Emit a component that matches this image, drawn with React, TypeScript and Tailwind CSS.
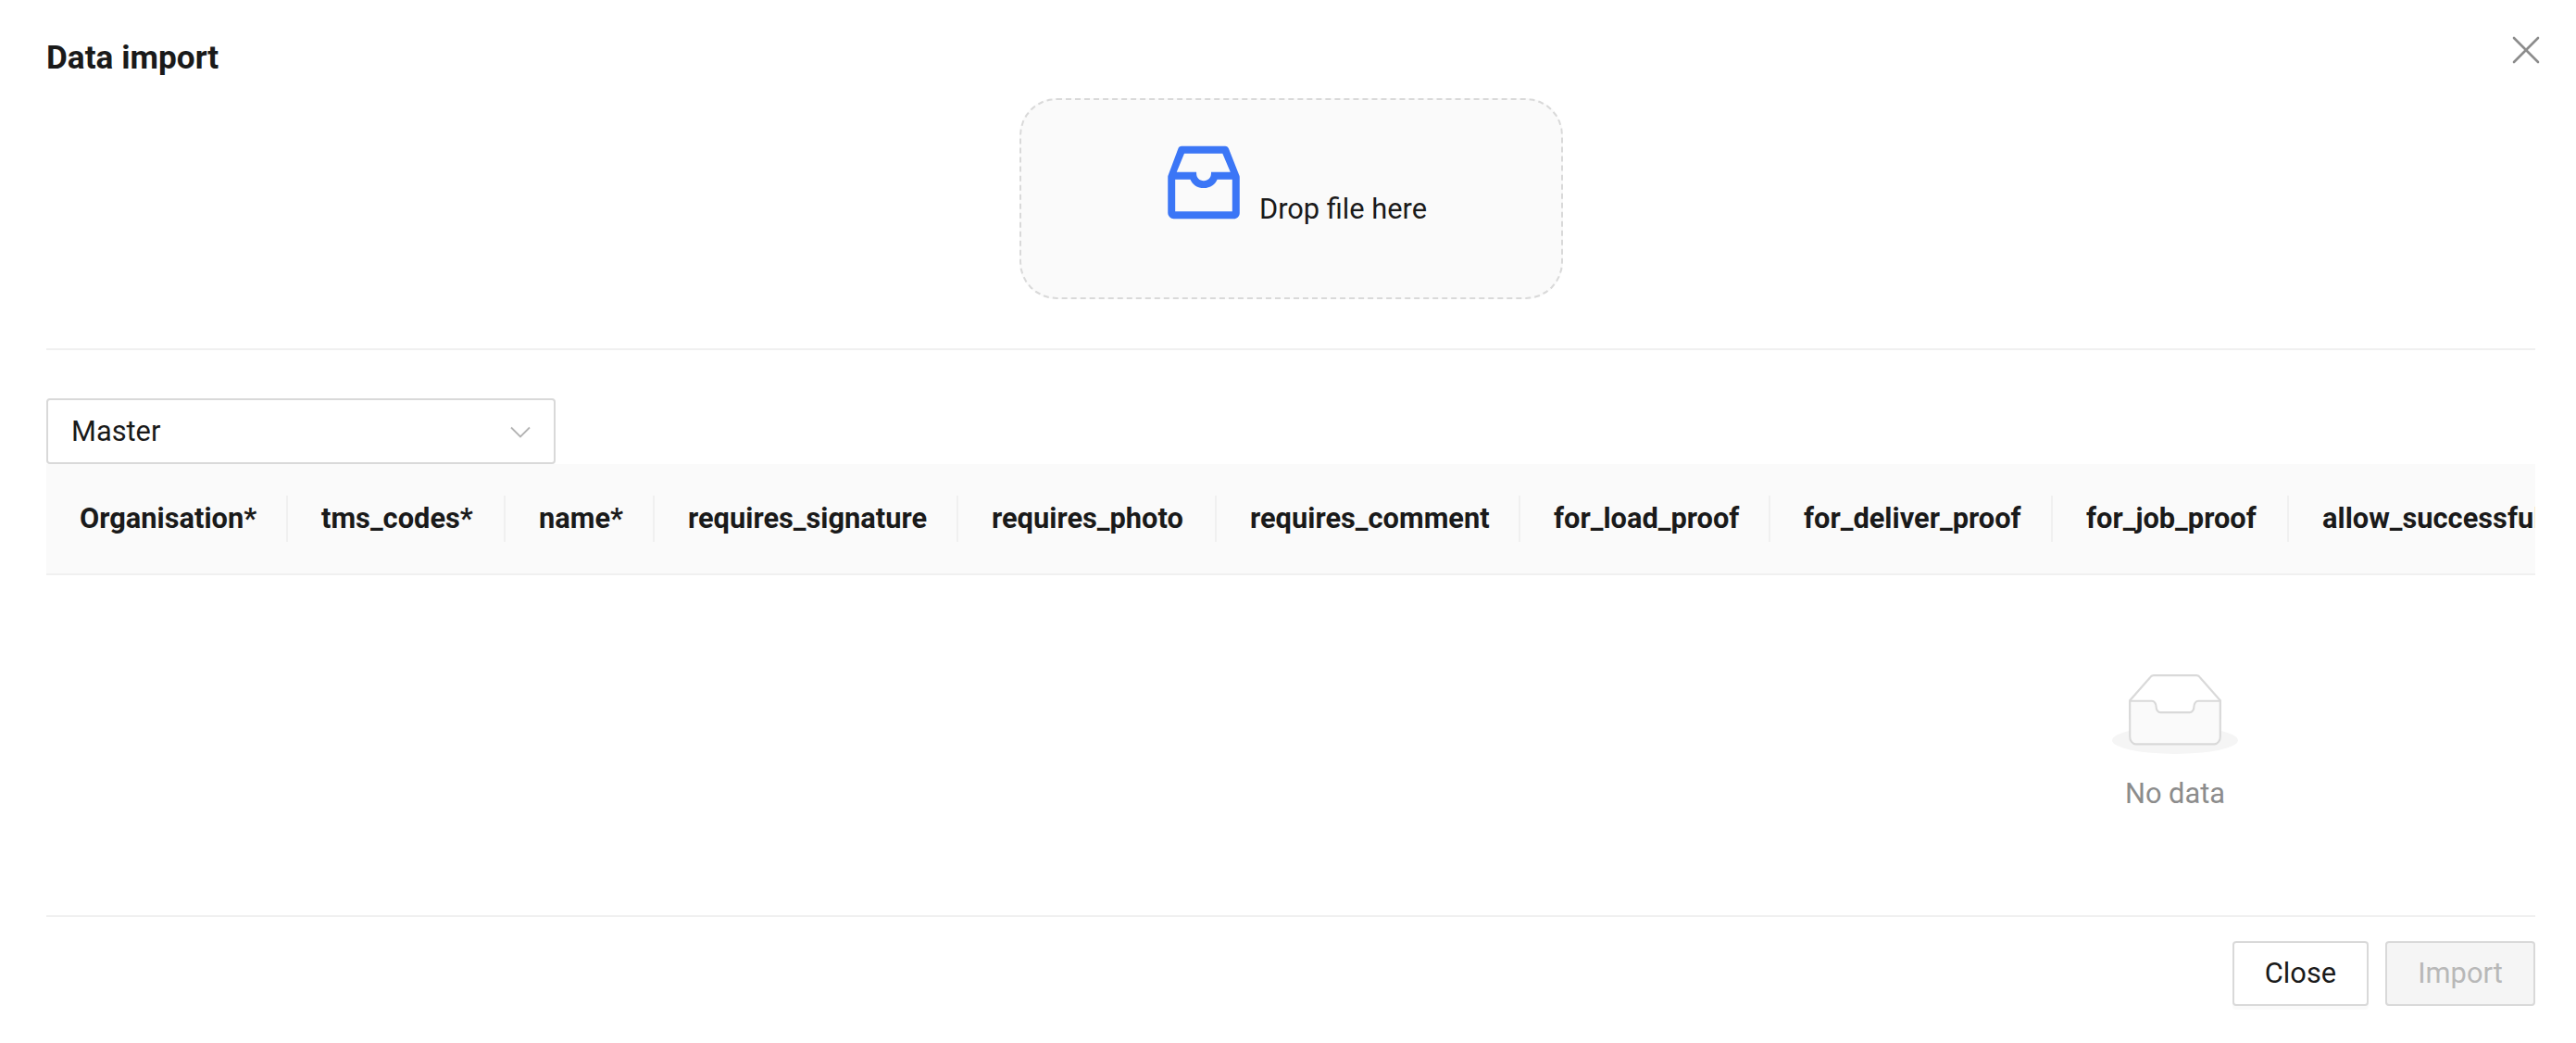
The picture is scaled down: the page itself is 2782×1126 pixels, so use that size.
import { AiOutlineInbox } from "react-icons/ai";

const columns = [
  { name: "Organisation*", width: "w-[261px]" },
  { name: "tms_codes*", width: "w-[235px]" },
  { name: "name*", width: "w-[161px]" },
  { name: "requires_signature", width: "w-[328px]" },
  { name: "requires_photo", width: "w-[279px]" },
  { name: "requires_comment", width: "w-[328px]" },
  { name: "for_load_proof", width: "w-[270px]" },
  { name: "for_deliver_proof", width: "w-[305px]" },
  { name: "for_job_proof", width: "w-[255px]" },
  { name: "allow_successful_delivery", width: "w-[460px]" },
];

function EmptyImage() {
  return (
    <svg width="136" height="87" viewBox="0 0 64 41">
      <g transform="translate(0 1)" fill="none" fillRule="evenodd">
        <ellipse fill="#f5f5f5" cx="32" cy="33" rx="32" ry="7" />
        <g fillRule="nonzero" stroke="#d9d9d9">
          <path d="M55 12.76L44.854 1.258C44.367.474 43.656 0 42.907 0H21.093c-.749 0-1.46.474-1.947 1.257L9 12.761V22h46v-9.24z" />
          <path
            d="M41.613 15.931c0-1.605.994-2.93 2.227-2.931H55v18.137C55 33.26 53.68 35 52.05 35h-40.1C10.32 35 9 33.259 9 31.137V13h11.16c1.233 0 2.227 1.323 2.227 2.928v.022c0 1.605 1.005 2.901 2.237 2.901h14.752c1.232 0 2.237-1.308 2.237-2.913v-.007z"
            fill="#fafafa"
          />
        </g>
      </g>
    </svg>
  );
}

export default function App() {
  return (
    <div className="relative h-[1126px] w-[2782px] overflow-hidden bg-white pl-[50px] pr-[44px] font-['Roboto',sans-serif] text-[#1a1a1a]">
      <button className="absolute right-[38px] top-[38px] text-[#8c8c8c]">
        <svg width="32" height="32" viewBox="0 0 32 32" stroke="currentColor" strokeWidth="2.6" strokeLinecap="round">
          <line x1="3" y1="3" x2="29" y2="29" />
          <line x1="29" y1="3" x2="3" y2="29" />
        </svg>
      </button>

      <h1 className="h-[106px] pt-[42px] text-[35.2px] font-bold leading-[40px]">Data import</h1>

      <div className="flex justify-center border-b-2 border-[#f0f0f0] pb-[53px]">
        <div className="flex h-[217px] w-[587px] justify-center rounded-[40px] border-2 border-dashed border-[#d9d9d9] bg-[#fafafa] pt-[36px]">
          <AiOutlineInbox className="mr-[7px] text-[106px] text-[#3b76f6]" />
          <span className="mt-[60px] text-[30.8px] leading-[44px]">Drop file here</span>
        </div>
      </div>

      <div className="mt-[52px] flex h-[71px] w-[550px] items-center justify-between rounded-[4px] border-2 border-[#d9d9d9] bg-white pl-[25px] pr-[25px] pt-[1px] text-[30.8px]">
        <span>Master</span>
        <svg width="22" height="13" viewBox="0 0 22 13" fill="none" stroke="#b3b3b3" strokeWidth="1.8">
          <path d="M1 1.5l10 10 10-10" />
        </svg>
      </div>

      <div className="overflow-hidden">
        <div className="w-[4598px]">
          <div className="flex h-[120px] items-center border-b-2 border-[#f0f0f0] bg-[#fafafa]">
            {columns.map((col) => (
              <div key={col.name} className={`flex shrink-0 items-center justify-between ${col.width}`}>
                <span className="whitespace-nowrap pl-[36px] text-[30.8px] font-bold leading-[44px]">{col.name}</span>
                <div className="h-[50px] w-[2px] bg-[#f0f0f0]" />
              </div>
            ))}
          </div>
          <div className="flex h-[367px] flex-col items-center pt-[106px]">
            <EmptyImage />
            <span className="mt-[21px] text-[30.8px] leading-[44px] text-[#8c8c8c]">No data</span>
          </div>
        </div>
      </div>

      <div className="flex justify-end gap-[18px] border-t-2 border-[#f0f0f0] pt-[26px]">
        <button className="h-[70px] w-[147px] rounded-[4px] border-2 border-[#d9d9d9] bg-white text-[30.8px] text-[#1a1a1a] shadow-[0_4px_0_rgba(0,0,0,0.02)]">
          Close
        </button>
        <button className="h-[70px] w-[162px] rounded-[4px] border-2 border-[#d9d9d9] bg-[#f5f5f5] text-[30.8px] text-[#b8b8b8]">
          Import
        </button>
      </div>
    </div>
  );
}
